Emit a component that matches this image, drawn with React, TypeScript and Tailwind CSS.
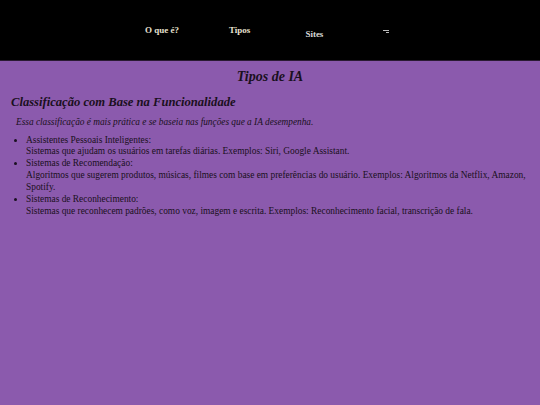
export default function App() {
  return (
    <div className="min-h-[405px] bg-[#8b5aad] font-['Liberation_Serif',serif] text-[#1a1020]">
      <header className="h-[61px] border-b border-[#2a1a33] bg-black">
        <nav className="flex h-full items-start pt-[24px] text-[9px] font-bold text-[#e8e0d0]">
          <a className="ml-[145px]">O que é?</a>
          <a className="ml-[50px]">Tipos</a>
          <a className="ml-[55px] mt-[4px] text-[#d8d8d8]">Sites</a>
          <span className="ml-[60px] mt-[6px]">
            <svg width="6" height="4" viewBox="0 0 6 4">
              <path d="M0 0.5H6M3 2.5H6" stroke="#bbb" strokeWidth="1" />
            </svg>
          </span>
        </nav>
      </header>
      <main className="px-[11px]">
        <h1 className="mt-[8px] text-center text-[14px] leading-[16px] font-bold italic">Tipos de IA</h1>
        <h2 className="mt-[10px] text-[12.6px] leading-[15px] font-bold italic">
          Classificação com Base na Funcionalidade
        </h2>
        <p className="mt-[5.5px] pl-[5px] text-[9.3px] leading-[12px] italic">
          Essa classificação é mais prática e se baseia nas funções que a IA desempenha.
        </p>
        <ul className="mt-[7px] list-disc pl-[15px] text-[9.4px] leading-[11.9px]">
          <li>
            Assistentes Pessoais Inteligentes:
            <br />
            Sistemas que ajudam os usuários em tarefas diárias. Exemplos: Siri, Google Assistant.
          </li>
          <li>
            Sistemas de Recomendação:
            <br />
            Algoritmos que sugerem produtos, músicas, filmes com base em preferências do usuário. Exemplos: Algoritmos da Netflix, Amazon, Spotify.
          </li>
          <li>
            Sistemas de Reconhecimento:
            <br />
            Sistemas que reconhecem padrões, como voz, imagem e escrita. Exemplos: Reconhecimento facial, transcrição de fala.
          </li>
        </ul>
      </main>
    </div>
  );
}
